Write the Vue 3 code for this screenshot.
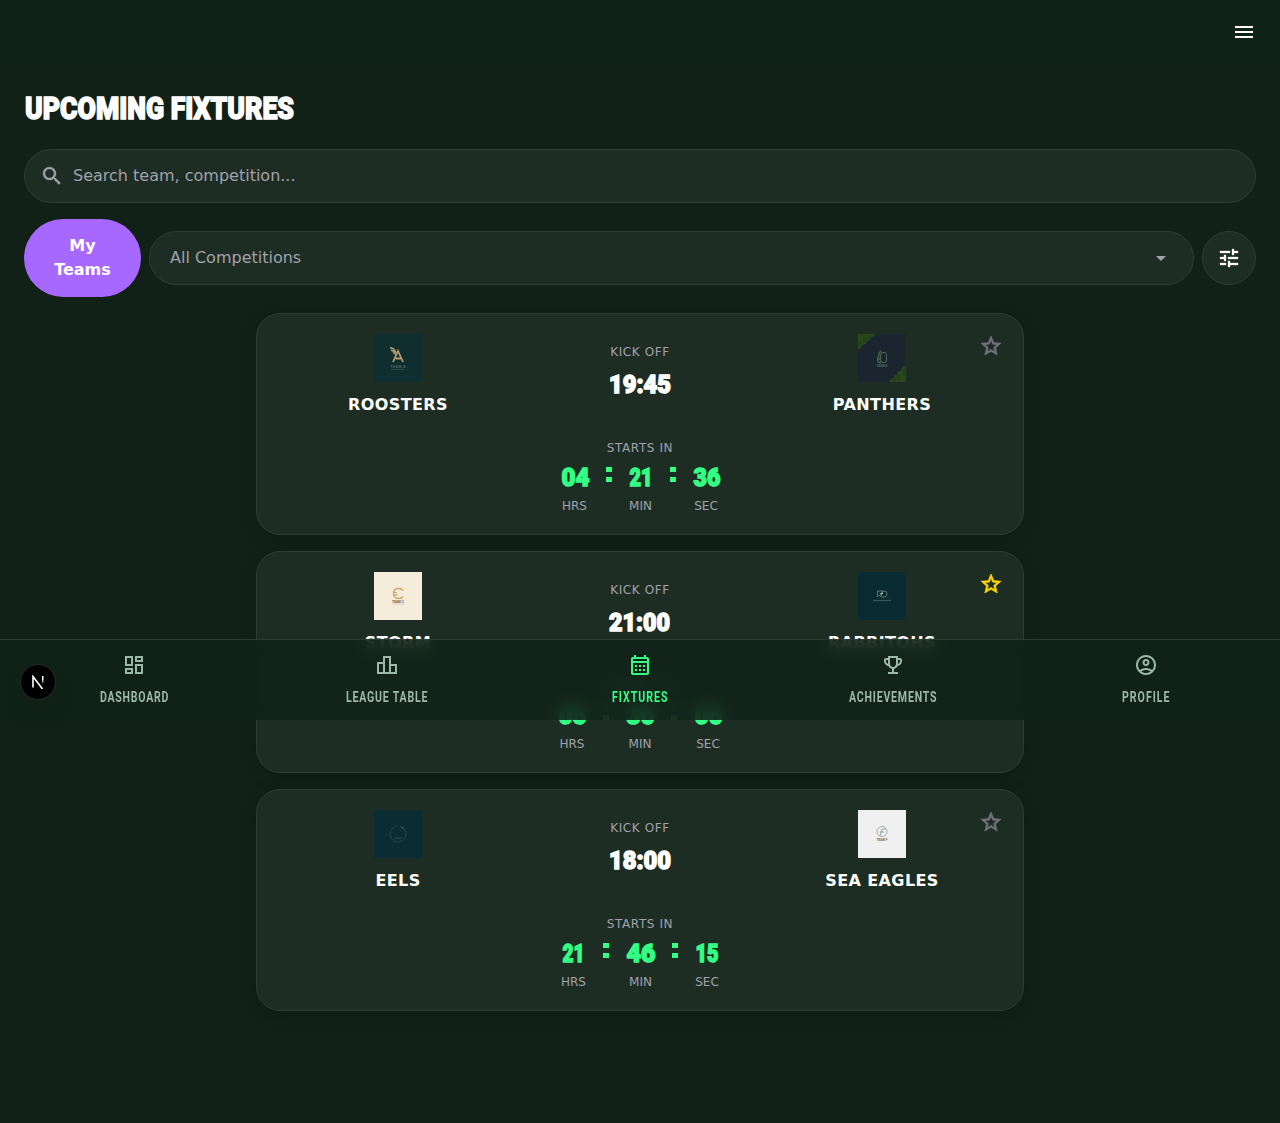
<script setup>
const fixtures = [
  {
    home: 'ROOSTERS', away: 'PANTHERS', time: '19:45', timeWidth: 62, homeCrest: 'a', awayCrest: 'b', star: false,
    units: [['04', 'HRS', 28], ['21', 'MIN', 23], ['36', 'SEC', 27]],
  },
  {
    home: 'STORM', away: 'RABBITOHS', time: '21:00', timeWidth: 61, homeCrest: 'c', awayCrest: 'd', star: true,
    units: [['05', 'HRS', 28], ['36', 'MIN', 28], ['06', 'SEC', 28]],
  },
  {
    home: 'EELS', away: 'SEA EAGLES', time: '18:00', timeWidth: 62, homeCrest: 'e', awayCrest: 'f', star: false,
    units: [['21', 'HRS', 22], ['46', 'MIN', 29], ['15', 'SEC', 23]],
  },
]

const labelScale = 0.74

const tabs = [
  { label: 'DASHBOARD', width: 69, icon: 'M19 5v2h-4V5h4M9 5v6H5V5h4m10 8v6h-4v-6h4M9 17v2H5v-2h4M21 3h-8v6h8V3zM11 3H3v10h8V3zm10 8h-8v10h8V11zm-10 4H3v6h8v-6z' },
  { label: 'LEAGUE TABLE', width: 82, icon: 'M16 11V3H8v6H2v12h20V11h-6zm-6-6h4v14h-4V5zm-6 6h4v8H4v-8zm16 8h-4v-6h4v6z' },
  { label: 'FIXTURES', width: 56, active: true, icon: 'M19 4h-1V2h-2v2H8V2H6v2H5c-1.11 0-2 .9-2 2v14c0 1.1.89 2 2 2h14c1.1 0 2-.9 2-2V6c0-1.1-.9-2-2-2zm0 16H5V10h14v10zM5 8V6h14v2H5zm2 4h2v2H7zm4 0h2v2h-2zm4 0h2v2h-2zm-8 4h2v2H7zm4 0h2v2h-2zm4 0h2v2h-2z' },
  { label: 'ACHIEVEMENTS', width: 88, icon: 'M19 5h-2V3H7v2H5c-1.1 0-2 .9-2 2v1c0 2.55 1.92 4.63 4.39 4.94.63 1.5 1.98 2.63 3.61 2.96V19H7v2h10v-2h-4v-3.1c1.63-.33 2.98-1.46 3.61-2.96C19.08 12.63 21 10.55 21 8V7c0-1.1-.9-2-2-2zM5 8V7h2v3.82C5.84 10.4 5 9.3 5 8zm7 6c-1.65 0-3-1.35-3-3V5h6v6c0 1.65-1.35 3-3 3zm7-6c0 1.3-.84 2.4-2 2.82V7h2v1z' },
  { label: 'PROFILE', width: 48, icon: 'M12 2C6.48 2 2 6.48 2 12s4.48 10 10 10 10-4.48 10-10S17.52 2 12 2zM7.35 18.5C8.66 17.56 10.26 17 12 17s3.34.56 4.65 1.5c-1.31.94-2.91 1.5-4.65 1.5s-3.34-.56-4.65-1.5zm10.79-1.38C16.45 15.8 14.32 15 12 15s-4.45.8-6.14 2.12C4.7 15.73 4 13.95 4 12c0-4.42 3.58-8 8-8s8 3.58 8 8c0 1.95-.7 3.73-1.86 5.12zM12 6c-1.93 0-3.5 1.57-3.5 3.5S10.07 13 12 13s3.5-1.57 3.5-3.5S13.93 6 12 6zm0 5c-.83 0-1.5-.67-1.5-1.5S11.17 8 12 8s1.5.67 1.5 1.5S12.83 11 12 11z' },
]
</script>

<template>
  <div class="page">
    <header class="topbar">
      <svg class="icon" viewBox="0 0 24 24"><path d="M3 18h18v-2H3v2zm0-5h18v-2H3v2zm0-7v2h18V6H3z" /></svg>
    </header>

    <main class="content">
      <h1 class="title">
        <svg width="272" height="40" class="display heading">
          <text x="1" y="31" textLength="269" lengthAdjust="spacingAndGlyphs">UPCOMING FIXTURES</text>
        </svg>
      </h1>

      <div class="field search">
        <svg class="icon" viewBox="0 0 24 24"><path d="M15.5 14h-.79l-.28-.27C15.41 12.59 16 11.11 16 9.5 16 5.91 13.09 3 9.5 3S3 5.91 3 9.5 5.91 16 9.5 16c1.61 0 3.09-.59 4.23-1.57l.27.28v.79l5 4.99L20.49 19l-4.99-5zm-6 0C7.01 14 5 11.99 5 9.5S7.01 5 9.5 5 14 7.01 14 9.5 11.99 14 9.5 14z" /></svg>
        <span>Search team, competition...</span>
      </div>

      <div class="filters">
        <button class="mine">My<br>Teams</button>
        <div class="field select">
          <span>All Competitions</span>
          <svg class="icon" viewBox="0 0 24 24"><path d="M7 10l5 5 5-5z" /></svg>
        </div>
        <button class="field tune">
          <svg class="icon" viewBox="0 0 24 24"><path d="M3 17v2h6v-2H3zM3 5v2h10V5H3zm10 16v-2h8v-2h-8v-2h-2v6h2zM7 9v2H3v2h4v2h2V9H7zm14 4v-2H11v2h10zm-6-4h2V7h4V5h-4V3h-2v6z" /></svg>
        </button>
      </div>

      <section class="list">
        <article v-for="f in fixtures" :key="f.home" class="card">
          <div class="teams">
            <div v-for="side in ['home', 'away']" :key="side" class="team" :class="side">
              <svg class="crest" viewBox="0 0 48 48">
                <template v-if="f[side + 'Crest'] === 'a'">
                  <rect width="48" height="48" fill="#102e30" />
                  <g fill="none" stroke="#b39b6b"><path d="M19 28l5-11 5 11M21.5 24.5h6" stroke-width="1.8" /><path d="M16 13.5l4 1.5 2 4M17 16l4 2M19 18.5l3 2" stroke-width="1.5" /></g>
                  <text x="24" y="34" textLength="15" class="tiny" fill="#607267">TEAM A</text>
                  <path d="M17 35.5h13" stroke="#405d52" stroke-width=".6" />
                </template>
                <template v-else-if="f[side + 'Crest'] === 'b'">
                  <rect width="48" height="48" fill="#1a2530" />
                  <path d="M0 0h17q0 3-4 3 0 4-4 4-1 4-5 4 0 3-4 4z M48 32v16H31q1-4 5-4 0-4 3-3 0-5 4-4 0-5 5-5z" fill="#294719" />
                  <path d="M2 11V6M6 8V3M11 5V1M36 48v-4M41 46v-6M46 42v-7" stroke="#1c3320" stroke-width="1" />
                  <g fill="none" stroke="#52655b" stroke-width="1"><rect x="22.5" y="18.5" width="6" height="10" rx="2.5" /><path d="M23 17q-3 3-2 5-2 2-1 6l3 1M20 25h3" stroke="#4c6541" stroke-width="1.4" /></g>
                  <text x="24" y="32.5" textLength="11" class="tiny" fill="#56665f">TEAM B</text>
                </template>
                <template v-else-if="f[side + 'Crest'] === 'c'">
                  <rect width="48" height="48" fill="#f6ecdc" />
                  <path d="M29 18.5q-1-2-4.5-2-5 0-5 5t5 5q3 0 4.5-2" fill="none" stroke="#cbaa67" stroke-width="1.4" />
                  <path d="M19 20l4 1M20 23h4" stroke="#bea15e" />
                  <text x="24" y="31" textLength="12" class="tiny" fill="#59554a">TEAM C</text>
                  <path d="M18 32h12" stroke="#bdb5a6" stroke-width=".5" />
                </template>
                <template v-else-if="f[side + 'Crest'] === 'd'">
                  <rect width="48" height="48" fill="#082b32" />
                  <g fill="none" stroke="#5f7772"><path d="M19.5 25v-6h5v3l-4 2M24 19h2q3 0 3 3t-3 3h-3z" /><path d="M22 22l3-1" stroke="#b5b69f" /></g>
                  <path d="M15 28.5h18" stroke="#385653" stroke-width="1.3" />
                </template>
                <template v-else-if="f[side + 'Crest'] === 'e'">
                  <rect width="48" height="48" fill="#092d33" />
                  <circle cx="24" cy="24" r="8" fill="none" stroke="#1d4e4c" stroke-width=".8" stroke-dasharray="46 4.3" transform="rotate(-75 24 24)" />
                  <path d="M27 16.5l3 3" stroke="#477571" stroke-width=".8" /><path d="M20.5 28h7" stroke="#21504f" />
                </template>
                <template v-else>
                  <rect width="48" height="48" fill="#f0f0f0" />
                  <circle cx="24" cy="21.5" r="5" fill="none" stroke="#929a98" stroke-width=".8" />
                  <path d="M22 26l2-7h4M22 22h4" fill="none" stroke="#929a98" stroke-width=".9" />
                  <text x="24" y="31" textLength="11" class="tiny" fill="#666">TEAM F</text>
                </template>
              </svg>
              <strong>{{ f[side] }}</strong>
            </div>
            <div class="kickoff">
              <span class="caption">KICK OFF</span>
              <svg width="64" height="30" class="display number">
                <text x="1" y="25" :textLength="f.timeWidth" lengthAdjust="spacingAndGlyphs">{{ f.time }}</text>
              </svg>
            </div>
          </div>
          <div class="countdown">
            <span class="caption">STARTS IN</span>
            <div class="clock">
              <template v-for="(u, i) in f.units" :key="i">
                <span v-if="i" class="colon"></span>
                <div class="unit">
                  <svg :width="u[2]" height="34" class="display number">
                    <text x="0.5" y="22" :textLength="u[2]" lengthAdjust="spacingAndGlyphs">{{ u[0] }}</text>
                  </svg>
                  <span>{{ u[1] }}</span>
                </div>
              </template>
            </div>
          </div>
          <svg class="icon star" :class="{ on: f.star }" viewBox="0 0 24 24"><path d="M22 9.24l-7.19-.62L12 2 9.19 8.63 2 9.24l5.46 4.73L5.82 21 12 17.27 18.18 21l-1.63-7.03L22 9.24zM12 15.4l-3.76 2.27 1-4.28-3.32-2.88 4.38-.38L12 6.1l1.71 4.04 4.38.38-3.32 2.88 1 4.28L12 15.4z" /></svg>
        </article>
      </section>
    </main>

    <nav class="tabs">
      <a v-for="t in tabs" :key="t.label" class="tab" :class="{ active: t.active }">
        <svg class="icon" viewBox="0 0 24 24"><path :d="t.icon" /></svg>
        <svg :width="t.width" height="20" class="display label">
          <text x="0" y="15.5" :transform="`scale(${labelScale} 1)`" :textLength="(t.width - 0.5) / labelScale" lengthAdjust="spacing">{{ t.label }}</text>
        </svg>
      </a>
    </nav>

    <div class="devtools">
      <svg width="14" height="14" viewBox="0 0 14 14" fill="none">
        <defs><linearGradient id="fade" x1="0" y1="0" x2="0" y2="1"><stop offset=".4" stop-color="#fff" /><stop offset="1" stop-color="#fff" stop-opacity="0" /></linearGradient></defs>
        <path d="M2 12.5V1.5L11.5 14" stroke="#fff" stroke-width="1.6" /><rect x="11" y="1" width="1.5" height="8.5" fill="url(#fade)" />
      </svg>
    </div>
  </div>
</template>

<style>
body {
  margin: 0;
  background: #112117;
}
</style>

<style scoped>
.page {
  position: relative;
  height: 1123px;
  overflow: hidden;
  background: #112117;
  color: #fff;
  font: 16px/24px "DejaVu Sans", sans-serif;
}
.icon {
  width: 24px;
  height: 24px;
  fill: currentColor;
  flex: none;
}
.display {
  display: block;
  overflow: visible;
  fill: currentColor;
  stroke: currentColor;
  font-family: Roboto, "Liberation Sans", sans-serif;
  font-weight: 900;
}
.heading {
  font-size: 31px;
  stroke-width: 1.5px;
}
.number {
  font-size: 26.5px;
  stroke-width: 1.5px;
}
.label {
  font-size: 14.3px;
  font-weight: 700;
  stroke-width: 0;
}
.topbar {
  height: 64px;
  padding: 0 24px;
  display: flex;
  align-items: center;
  justify-content: flex-end;
  background: #112218;
}
.content {
  padding: 24px 24px 0;
}
.title {
  margin: 0;
  height: 61px;
}
.field {
  box-sizing: border-box;
  height: 54px;
  display: flex;
  align-items: center;
  border: 1px solid #2c3d33;
  border-radius: 27px;
  background: #1d2d24;
  color: #a1a1aa;
}
.search {
  padding: 0 15px;
  gap: 9px;
}
.search .icon,
.tune .icon {
  stroke: currentColor;
  stroke-width: 0.3px;
}
.search span,
.select span {
  padding-bottom: 1px;
}
.filters {
  display: flex;
  align-items: center;
  gap: 8px;
  margin-top: 16px;
}
.mine {
  width: 117px;
  height: 78px;
  padding: 0;
  border: 0;
  border-radius: 39px;
  background: #a768ff;
  color: #fff;
  font: 700 16px/24px "DejaVu Sans", sans-serif;
}
.select {
  flex: 1;
  padding: 0 20px;
  justify-content: space-between;
}
.tune {
  width: 54px;
  padding: 0;
  justify-content: center;
  color: #fff;
}
.list {
  width: 768px;
  margin: 16px auto 0;
  display: flex;
  flex-direction: column;
  gap: 16px;
}
.card {
  position: relative;
  box-sizing: border-box;
  height: 222px;
  padding: 20px;
  border: 1px solid #2c3d33;
  border-radius: 24px;
  background: #1d2d24;
  box-shadow: 0 4px 20px rgba(0, 0, 0, 0.14);
}
.teams {
  display: flex;
  height: 106px;
}
.team,
.kickoff {
  flex: 1;
  display: flex;
  flex-direction: column;
  align-items: center;
}
.kickoff {
  order: 1;
  padding-top: 10px;
}
.away {
  order: 2;
}
.kickoff .display {
  margin-top: 8px;
}
.crest {
  width: 48px;
  height: 48px;
  margin-bottom: 11px;
}
.tiny {
  font: 700 3px "Liberation Sans", sans-serif;
  text-anchor: middle;
}
.team strong {
  letter-spacing: 0.4px;
}
.caption {
  font-size: 12px;
  line-height: 16px;
  letter-spacing: 0.6px;
  color: #a1a1aa;
}
.countdown {
  display: flex;
  flex-direction: column;
  align-items: center;
}
.clock {
  display: flex;
  gap: 17px;
  padding-top: 8px;
}
.unit {
  min-width: 24px;
  display: flex;
  flex-direction: column;
  align-items: center;
  color: #33ff85;
}
.unit span {
  font-size: 12px;
  line-height: 16px;
  color: #a1a1aa;
}
.colon {
  width: 6px;
  height: 5px;
  margin-top: 3px;
  background: #33ff85;
  box-shadow: 0 10px #33ff85;
}
.star {
  position: absolute;
  top: 20px;
  right: 20px;
  color: #71717a;
  stroke: currentColor;
  stroke-width: 0.7px;
}
.star.on {
  color: #ffd700;
}
.tabs {
  position: absolute;
  top: 639px;
  left: 0;
  right: 0;
  box-sizing: border-box;
  height: 81px;
  padding: 0 8px;
  display: flex;
  border-top: 1px solid #2a3b31;
  background: rgba(17, 34, 24, 0.85);
  backdrop-filter: blur(8px);
}
.tab {
  flex: 1;
  display: flex;
  flex-direction: column;
  align-items: center;
  gap: 10px;
  padding-top: 13px;
  color: #9db8a9;
}
.active {
  color: #33ff85;
}
.devtools {
  position: absolute;
  left: 20px;
  top: 664px;
  width: 36px;
  height: 36px;
  box-sizing: border-box;
  display: grid;
  place-items: center;
  border: 1px solid #2a2a2a;
  border-radius: 50%;
  background: #000;
  box-shadow: 0 16px 32px -8px rgba(0, 0, 0, 0.24);
}
</style>
